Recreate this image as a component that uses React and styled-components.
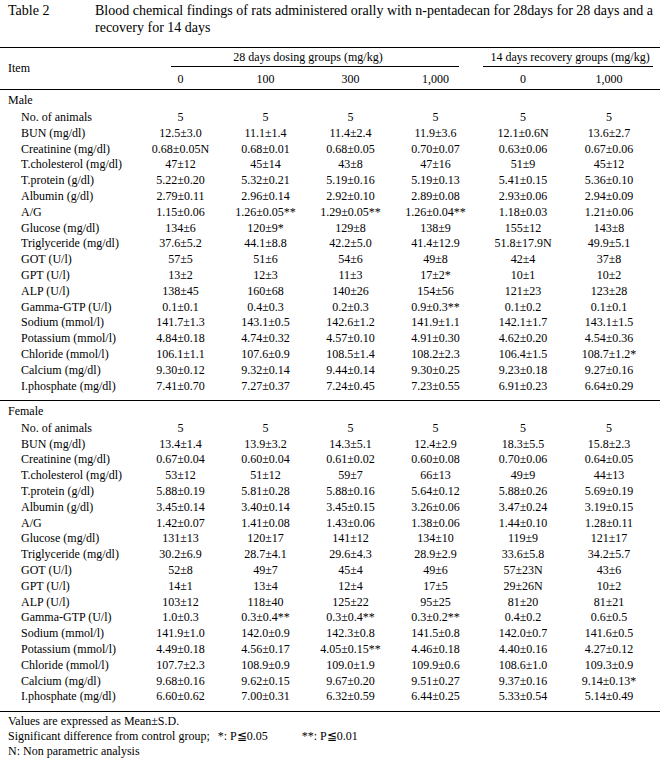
import React from "react";
import styled, { createGlobalStyle } from "styled-components";

const male = [
  ["No. of animals", "5", "5", "5", "5", "5", "5"],
  ["BUN (mg/dl)", "12.5±3.0", "11.1±1.4", "11.4±2.4", "11.9±3.6", "12.1±0.6N", "13.6±2.7"],
  ["Creatinine (mg/dl)", "0.68±0.05N", "0.68±0.01", "0.68±0.05", "0.70±0.07", "0.63±0.06", "0.67±0.06"],
  ["T.cholesterol (mg/dl)", "47±12", "45±14", "43±8", "47±16", "51±9", "45±12"],
  ["T.protein (g/dl)", "5.22±0.20", "5.32±0.21", "5.19±0.16", "5.19±0.13", "5.41±0.15", "5.36±0.10"],
  ["Albumin (g/dl)", "2.79±0.11", "2.96±0.14", "2.92±0.10", "2.89±0.08", "2.93±0.06", "2.94±0.09"],
  ["A/G", "1.15±0.06", "1.26±0.05**", "1.29±0.05**", "1.26±0.04**", "1.18±0.03", "1.21±0.06"],
  ["Glucose (mg/dl)", "134±6", "120±9*", "129±8", "138±9", "155±12", "143±8"],
  ["Triglyceride (mg/dl)", "37.6±5.2", "44.1±8.8", "42.2±5.0", "41.4±12.9", "51.8±17.9N", "49.9±5.1"],
  ["GOT (U/l)", "57±5", "51±6", "54±6", "49±8", "42±4", "37±8"],
  ["GPT (U/l)", "13±2", "12±3", "11±3", "17±2*", "10±1", "10±2"],
  ["ALP (U/l)", "138±45", "160±68", "140±26", "154±56", "121±23", "123±28"],
  ["Gamma-GTP (U/l)", "0.1±0.1", "0.4±0.3", "0.2±0.3", "0.9±0.3**", "0.1±0.2", "0.1±0.1"],
  ["Sodium (mmol/l)", "141.7±1.3", "143.1±0.5", "142.6±1.2", "141.9±1.1", "142.1±1.7", "143.1±1.5"],
  ["Potassium (mmol/l)", "4.84±0.18", "4.74±0.32", "4.57±0.10", "4.91±0.30", "4.62±0.20", "4.54±0.36"],
  ["Chloride (mmol/l)", "106.1±1.1", "107.6±0.9", "108.5±1.4", "108.2±2.3", "106.4±1.5", "108.7±1.2*"],
  ["Calcium (mg/dl)", "9.30±0.12", "9.32±0.14", "9.44±0.14", "9.30±0.25", "9.23±0.18", "9.27±0.16"],
  ["I.phosphate (mg/dl)", "7.41±0.70", "7.27±0.37", "7.24±0.45", "7.23±0.55", "6.91±0.23", "6.64±0.29"],
];

const female = [
  ["No. of animals", "5", "5", "5", "5", "5", "5"],
  ["BUN (mg/dl)", "13.4±1.4", "13.9±3.2", "14.3±5.1", "12.4±2.9", "18.3±5.5", "15.8±2.3"],
  ["Creatinine (mg/dl)", "0.67±0.04", "0.60±0.04", "0.61±0.02", "0.60±0.08", "0.70±0.06", "0.64±0.05"],
  ["T.cholesterol (mg/dl)", "53±12", "51±12", "59±7", "66±13", "49±9", "44±13"],
  ["T.protein (g/dl)", "5.88±0.19", "5.81±0.28", "5.88±0.16", "5.64±0.12", "5.88±0.26", "5.69±0.19"],
  ["Albumin (g/dl)", "3.45±0.14", "3.40±0.14", "3.45±0.15", "3.26±0.06", "3.47±0.24", "3.19±0.15"],
  ["A/G", "1.42±0.07", "1.41±0.08", "1.43±0.06", "1.38±0.06", "1.44±0.10", "1.28±0.11"],
  ["Glucose (mg/dl)", "131±13", "120±17", "141±12", "134±10", "119±9", "121±17"],
  ["Triglyceride (mg/dl)", "30.2±6.9", "28.7±4.1", "29.6±4.3", "28.9±2.9", "33.6±5.8", "34.2±5.7"],
  ["GOT (U/l)", "52±8", "49±7", "45±4", "49±6", "57±23N", "43±6"],
  ["GPT (U/l)", "14±1", "13±4", "12±4", "17±5", "29±26N", "10±2"],
  ["ALP (U/l)", "103±12", "118±40", "125±22", "95±25", "81±20", "81±21"],
  ["Gamma-GTP (U/l)", "1.0±0.3", "0.3±0.4**", "0.3±0.4**", "0.3±0.2**", "0.4±0.2", "0.6±0.5"],
  ["Sodium (mmol/l)", "141.9±1.0", "142.0±0.9", "142.3±0.8", "141.5±0.8", "142.0±0.7", "141.6±0.5"],
  ["Potassium (mmol/l)", "4.49±0.18", "4.56±0.17", "4.05±0.15**", "4.46±0.18", "4.40±0.16", "4.27±0.12"],
  ["Chloride (mmol/l)", "107.7±2.3", "108.9±0.9", "109.0±1.9", "109.9±0.6", "108.6±1.0", "109.3±0.9"],
  ["Calcium (mg/dl)", "9.68±0.16", "9.62±0.15", "9.67±0.20", "9.51±0.27", "9.37±0.16", "9.14±0.13*"],
  ["I.phosphate (mg/dl)", "6.60±0.62", "7.00±0.31", "6.32±0.59", "6.44±0.25", "5.33±0.54", "5.14±0.49"],
];

const GlobalStyle = createGlobalStyle`
  body {
    margin: 0;
    background: #fff;
    color: #000;
    font-family: "Liberation Serif", "Times New Roman", serif;
  }
`;

const Page = styled.div`
  width: 660px;
`;

const Caption = styled.div`
  display: flex;
  padding: 2px 0 0 8px;
  margin-bottom: 11px;
  font-size: 14px;
  line-height: 17px;
`;

const CaptionLabel = styled.div`
  width: 87px;
  flex: none;
`;

const CaptionText = styled.div`
  white-space: nowrap;
`;

const Table = styled.table`
  width: 660px;
  table-layout: fixed;
  border-collapse: collapse;
  font-size: 12px;

  td,
  th {
    padding: 0;
    font-weight: normal;
    white-space: nowrap;
  }
`;

const Head = styled.thead`
  border-top: 1px solid #000;
  border-bottom: 1px solid #000;
`;

const ItemHead = styled.th`
  text-align: left;
  padding-left: 8px !important;
  vertical-align: middle;
`;

const GroupHead = styled.th`
  text-align: center;
  vertical-align: top;
  height: 19px;
  line-height: 15px;
  padding-top: 2px !important;
`;

const GroupLine = styled.div`
  border-top: 1px solid #000;
  margin: 1px ${(p) => p.$right}px 0 ${(p) => p.$left}px;
`;

const DoseCell = styled.th`
  text-align: center;
  height: 20px;
`;

const Section = styled.tbody`
  border-bottom: 1px solid #000;
`;

const SectionLabel = styled.td`
  height: 19px;
  padding-left: 8px !important;
  padding-top: 1px !important;
  text-align: left;
`;

const Row = styled.tr`
  height: 15.8px;
  line-height: 15.8px;
`;

const Label = styled.td`
  padding-left: 21px !important;
`;

const Value = styled.td`
  text-align: center;
`;

const Spacer = styled.tr`
  height: 6px;
`;

const Notes = styled.div`
  padding: 2px 0 0 8px;
  font-size: 12px;
  line-height: 15px;
`;

const NoteLine = styled.div`
  display: flex;
`;

const NoteMark = styled.span`
  margin-left: ${(p) => p.$gap}px;
`;

const GroupSection = ({ title, rows }) => (
  <Section>
    <tr>
      <SectionLabel colSpan={9}>{title}</SectionLabel>
    </tr>
    {rows.map(([label, ...vals]) => (
      <Row key={label}>
        <Label>{label}</Label>
        {vals.slice(0, 4).map((v, i) => (
          <Value key={i}>{v}</Value>
        ))}
        <td />
        {vals.slice(4).map((v, i) => (
          <Value key={i}>{v}</Value>
        ))}
        <td />
      </Row>
    ))}
    <Spacer>
      <td colSpan={9} />
    </Spacer>
  </Section>
);

export default function App() {
  return (
    <Page>
      <GlobalStyle />
      <Caption>
        <CaptionLabel>Table 2</CaptionLabel>
        <CaptionText>
          Blood chemical findings of rats administered orally with n-pentadecan for 28days for 28 days and a
          <br />
          recovery for 14 days
        </CaptionText>
      </Caption>

      <Table>
        <colgroup>
          <col style={{ width: 138 }} />
          <col style={{ width: 85 }} />
          <col style={{ width: 85 }} />
          <col style={{ width: 85 }} />
          <col style={{ width: 85 }} />
          <col style={{ width: 2 }} />
          <col style={{ width: 86 }} />
          <col style={{ width: 86 }} />
          <col style={{ width: 8 }} />
        </colgroup>
        <Head>
          <tr>
            <ItemHead rowSpan={2}>Item</ItemHead>
            <GroupHead colSpan={4}>
              28 days dosing groups (mg/kg)
              <GroupLine $left={33} $right={19} />
            </GroupHead>
            <th />
            <GroupHead colSpan={3}>
              14 days recovery groups (mg/kg)
              <GroupLine $left={3} $right={7} />
            </GroupHead>
          </tr>
          <tr>
            <DoseCell>0</DoseCell>
            <DoseCell>100</DoseCell>
            <DoseCell>300</DoseCell>
            <DoseCell>1,000</DoseCell>
            <th />
            <DoseCell>0</DoseCell>
            <DoseCell>1,000</DoseCell>
            <th />
          </tr>
        </Head>
        <GroupSection title="Male" rows={male} />
        <GroupSection title="Female" rows={female} />
      </Table>

      <Notes>
        <div>Values are expressed as Mean±S.D.</div>
        <NoteLine>
          <span>Significant difference from control group;</span>
          <NoteMark $gap={8}>*: P≦0.05</NoteMark>
          <NoteMark $gap={34}>**: P≦0.01</NoteMark>
        </NoteLine>
        <div>N: Non parametric analysis</div>
      </Notes>
    </Page>
  );
}
